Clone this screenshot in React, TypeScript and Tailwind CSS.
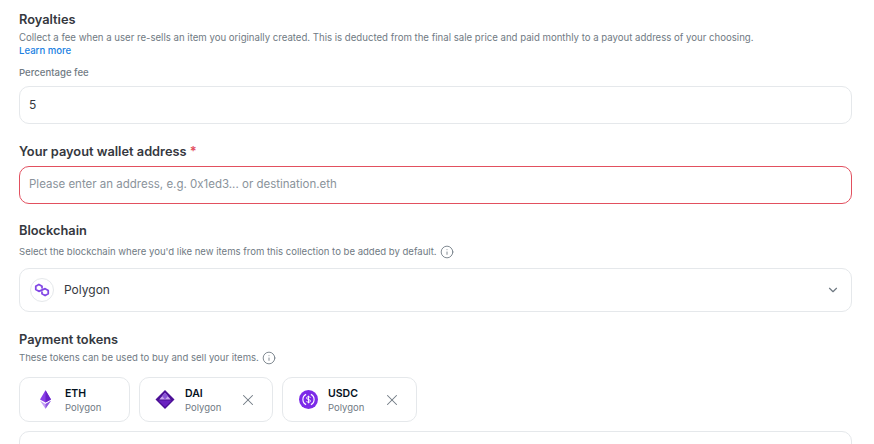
import { ChevronDown, Info, X } from 'lucide-react';

const FONT = "font-['Inter','Liberation_Sans',sans-serif]";

function PolygonMark({ className }: { className?: string }) {
  return (
    <svg viewBox="0 0 18 15" className={className} fill="none" stroke="#8247e5" strokeWidth="2" strokeLinejoin="round" strokeLinecap="round">
      <path d="M9 5V3.2L5.5 1.2 2 3.2V7l3.5 2 7-3 3.5 2v3.8l-3.5 2-3.5-2V10" />
    </svg>
  );
}

function EthMark() {
  return (
    <svg viewBox="0 0 12 20" className="w-[11px] h-[19px]">
      <path d="M6 0 0 10l6 3.4L12 10z" fill="#8a3fe8" />
      <path d="M6 0v13.4L12 10z" fill="#6a22c9" />
      <path d="M0 11.4 6 20l6-8.6-6 3.6z" fill="#c4a0f4" />
      <path d="M6 15v5l6-8.6z" fill="#8f55e0" />
    </svg>
  );
}

function DaiMark() {
  return (
    <svg viewBox="0 0 20 20" className="w-[20px] h-[19px]">
      <path d="M10 0 20 10 10 20 0 10z" fill="#4b0f96" />
      <path d="M10 3 16 10H4z" fill="#c9a8ee" />
      <path d="M10 3 13 6.5 10 10 7 6.5z" fill="#8a55d6" />
      <path d="M3 11h14l-7 7z" fill="#6a22c0" />
    </svg>
  );
}

function UsdcMark() {
  return (
    <svg viewBox="0 0 20 20" className="w-[19px] h-[19px]">
      <circle cx="10" cy="10" r="10" fill="#7c2ae8" />
      <path d="M7.5 4.6a6 6 0 0 0 0 10.8M12.5 4.6a6 6 0 0 1 0 10.8" fill="none" stroke="#fff" strokeWidth="1.2" />
      <path d="M12 8.2C11.6 7.4 10.9 7 10 7c-1.2 0-2 .6-2 1.5 0 2 4 1 4 3 0 .9-.8 1.5-2 1.5-.9 0-1.6-.4-2-1.2M10 6v8" fill="none" stroke="#fff" strokeWidth="1" />
    </svg>
  );
}

function TokenChip({ icon, name, width, removable }: { icon: React.ReactNode; name: string; width: string; removable?: boolean }) {
  return (
    <div className={`${width} h-[45px] rounded-[10px] border border-[#e5e8eb] flex items-center pl-[14px] pr-[15px]`}>
      <div className="w-[22px] flex justify-center shrink-0">{icon}</div>
      <div className="ml-[9px] flex-1 min-w-0 pt-[1px]">
        <p className="text-[10.5px] leading-[14px] font-semibold text-[#04111d]">{name}</p>
        <p className="text-[9.5px] leading-[13px] text-[#707a83]">Polygon</p>
      </div>
      {removable && <X className="w-[18px] h-[18px] text-[#707a83] shrink-0" strokeWidth={1.4} />}
    </div>
  );
}

export default function App() {
  return (
    <div className={`${FONT} w-[874px] h-[444px] overflow-hidden bg-white pl-[19px] pr-[22px] pt-[12px]`}>
      <h2 className="text-[12.8px] leading-[15px] font-semibold text-[#353840]">Royalties</h2>
      <p className="mt-[4px] text-[9.62px] leading-[13px] text-[#707a83] whitespace-nowrap">
        Collect a fee when a user re-sells an item you originally created. This is deducted from the final sale price and paid monthly to a payout address of your choosing.
      </p>
      <a className="block text-[9.6px] leading-[13px] font-medium text-[#2081e2]">Learn more</a>
      <label className="block mt-[9px] text-[9.6px] leading-[13px] font-medium text-[#707a83]">Percentage fee</label>
      <div className="mt-[7px] h-[38px] rounded-[10px] border border-[#e5e8eb] flex items-center px-[9px] text-[12px] text-[#353840]">5</div>

      <h2 className="mt-[20px] text-[12.8px] leading-[16px] font-semibold text-[#353840]">
        Your payout wallet address <span className="text-[#e2505f]">*</span>
      </h2>
      <div className="mt-[6px] h-[38px] rounded-[10px] border border-[#e2505f] flex items-center px-[9px] text-[11.5px] text-[#8a939b]">
        Please enter an address, e.g. 0x1ed3... or destination.eth
      </div>

      <h2 className="mt-[19px] text-[12.8px] leading-[16px] font-semibold text-[#353840]">Blockchain</h2>
      <div className="mt-[6px] flex items-center gap-[3px] h-[13px]">
        <p className="text-[9.55px] leading-[13px] text-[#707a83]">Select the blockchain where you'd like new items from this collection to be added by default.</p>
        <Info className="w-[14px] h-[14px] text-[#707a83]" strokeWidth={1.5} />
      </div>
      <div className="mt-[10px] h-[44px] rounded-[10px] border border-[#e5e8eb] flex items-center pl-[10px] pr-[11px]">
        <div className="w-[24px] h-[24px] rounded-full border border-[#e5e8eb] flex items-center justify-center">
          <PolygonMark className="w-[16px] h-[14px]" />
        </div>
        <span className="ml-[10px] flex-1 text-[12px] text-[#353840]">Polygon</span>
        <ChevronDown className="w-[14px] h-[14px] text-[#707a83]" strokeWidth={2} />
      </div>

      <h2 className="mt-[20px] text-[12.8px] leading-[16px] font-semibold text-[#353840]">Payment tokens</h2>
      <div className="mt-[3px] flex items-center gap-[3px] h-[13px]">
        <p className="text-[9.55px] leading-[13px] text-[#707a83]">These tokens can be used to buy and sell your items.</p>
        <Info className="w-[14px] h-[14px] text-[#707a83]" strokeWidth={1.5} />
      </div>
      <div className="mt-[13px] flex gap-[9px]">
        <TokenChip icon={<EthMark />} name="ETH" width="w-[111px]" />
        <TokenChip icon={<DaiMark />} name="DAI" width="w-[134px]" removable />
        <TokenChip icon={<UsdcMark />} name="USDC" width="w-[135px]" removable />
      </div>
      <div className="mt-[9px] h-[40px] rounded-[10px] border border-[#e5e8eb]" />
    </div>
  );
}
